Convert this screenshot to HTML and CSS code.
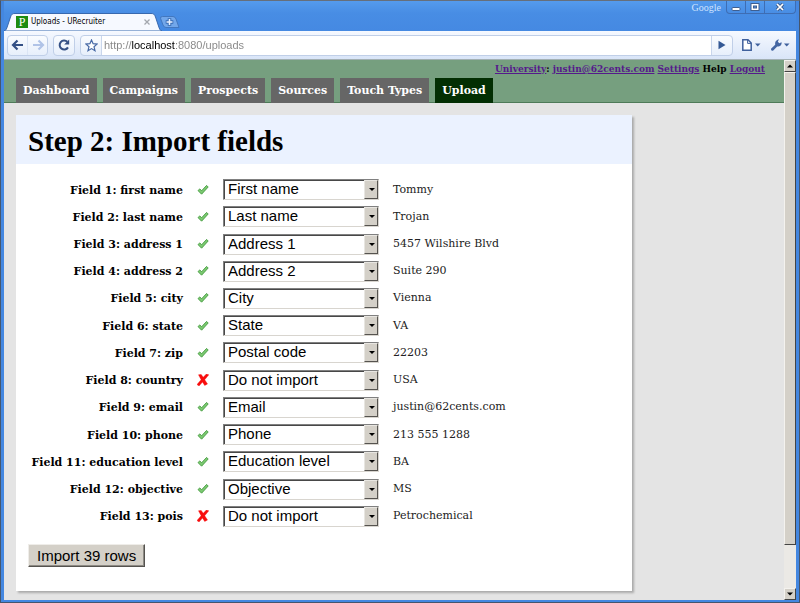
FILE: index.html
```html
<!DOCTYPE html>
<html lang="en">
<head>
<meta charset="utf-8">
<title>Uploads - URecruiter</title>
<link rel="stylesheet" href="styles.css">
</head>
<body>
<svg class="defs" aria-hidden="true">
  <symbol id="tick" viewBox="0 0 12 12"><path d="M1 6.600 2.800 4.900 4.600 6.800 9.600 1.400 11.200 3 4.600 10.200Z" fill="#7cc971" stroke="#449b40" stroke-width=".9" stroke-linejoin="round"/></symbol>
  <symbol id="cross" viewBox="0 0 12 12"><path d="M1.500.8 4.200.4 6.200 3.300 9.400 0 11.800.8 7.700 5.700 10.500 10 7.700 11.400 5.500 8 2 12 0 10.500 4.100 5.700Z" fill="#f80d0d" stroke="#f80d0d" stroke-width=".4"/></symbol>
</svg>
<div class="window">
  <div class="titlebar">
    <div class="tab">
      <svg class="tab-shape" viewBox="0 0 158 18" aria-hidden="true"><path d="M0 18C2 17.500 2.500 16 3.500 13L6.500 4C7.500 1 8.500.5 11 .5H147C149.500.5 150.500 1 151.500 4L154.500 13C155.500 16 156 17.500 158 18Z" fill="#f6f9ff" stroke="#3768ae"/></svg>
      <span class="favicon">P</span>
      <span class="tab-title">Uploads - URecruiter</span>
      <button class="tab-close" aria-label="Close tab"><svg viewBox="0 0 6 6"><path d="M.5.5 5.500 5.500M5.500.5.5 5.500" stroke="#a3a7ae" stroke-width="1.300"/></svg></button>
    </div>
    <button class="new-tab" aria-label="New tab"><svg viewBox="0 0 20 12"><path d="M2.500.5H13Q15 .5 16 3L19 11.500H6Q4 11.500 3 9L.6 2.500Q0 .5 2.500.5Z" fill="#72a7ea" stroke="#4277bf"/><path d="M9.500 2.200V9.800M5.700 6H13.300" stroke="#366bb4" stroke-width="3.600"/><path d="M9.500 3V9M6.500 6H12.500" stroke="#e6f0ff" stroke-width="1.600"/></svg></button>
    <span class="brand">Google</span>
    <div class="window-buttons">
      <button aria-label="Minimize"><svg viewBox="0 0 12 10"><rect x="2" y="5.500" width="8" height="3" rx="1" fill="#fff" stroke="#3e5f91"/></svg></button>
      <button aria-label="Maximize"><svg viewBox="0 0 12 10"><rect x="2" y="1.500" width="8" height="7" fill="#fff" stroke="#3e5f91"/><rect x="4.500" y="4" width="3" height="2" fill="#5591df" stroke="#3e5f91"/></svg></button>
      <button class="close" aria-label="Close"><svg viewBox="0 0 12 10"><path d="M3 2 9 8M9 2 3 8" stroke="#3e5f91" stroke-width="3.400"/><path d="M3 2 9 8M9 2 3 8" stroke="#fff" stroke-width="1.700"/></svg></button>
    </div>
  </div>
  <div class="toolbar">
    <div class="history">
      <button aria-label="Back"><svg viewBox="0 0 14 12"><path d="M6.500 1.500 2 6 6.500 10.500M2.500 6H12" fill="none" stroke="#345085" stroke-width="2.200"/></svg></button>
      <button aria-label="Forward"><svg viewBox="0 0 14 12"><path d="M7.500 1.500 12 6 7.500 10.500M11.500 6H2" fill="none" stroke="#b0c3e7" stroke-width="2.200"/></svg></button>
    </div>
    <button class="reload" aria-label="Reload"><svg viewBox="0 0 12 12"><path d="M10 8.400A4.500 4.500 0 1 1 9.300 2.800" fill="none" stroke="#345085" stroke-width="2"/><path d="M11.200.5V5.600H6.200Z" fill="#345085"/></svg></button>
    <form class="address">
      <button type="button" class="star" aria-label="Bookmark"><svg viewBox="0 0 13 13"><path d="M6.500 1 8.100 4.700 12 5.100 9 7.700 10 11.700 6.500 9.600 3 11.700 4 7.700 1 5.100 4.900 4.700Z" fill="#fff" stroke="#4668a5" stroke-width="1.200"/></svg></button>
      <div class="url-field"><input class="url" type="text" aria-label="Address" value="http://localhost:8080/uploads"></div>
      <button type="button" class="go" aria-label="Go"><svg viewBox="0 0 8 10"><path d="M.5.8 7.500 5 .5 9.200Z" fill="#345995"/></svg></button>
    </form>
    <button class="menu" aria-label="Page"><svg viewBox="0 0 20 14"><path d="M1.800 1.800H7L10.200 5V12.200H1.800Z" fill="#fff" stroke="#3f609d" stroke-width="1.500"/><path d="M6.600 2V5.400H10" fill="none" stroke="#3f609d"/><path d="M14 5.500H19.500L16.700 8.500Z" fill="#3f609d"/></svg></button>
    <button class="menu" aria-label="Tools"><svg viewBox="0 0 20 14"><path d="M1 10.700 5.200 6.700Q4.500 3 8 1.500L9 1.600 7.800 3.600 9.200 5.200 11.600 4.200Q12 7.600 8.500 8.500L7.200 8.600 3 12.700Q.5 13 1 10.700Z" fill="#4365a2"/><path d="M14 5.500H19.500L16.700 8.500Z" fill="#3f609d"/></svg></button>
  </div>
  <div class="viewport">
    <div class="page">
      <header class="site-header">
        <div class="account"><a href="#">University</a>: <a href="#">justin@62cents.com</a> <a href="#">Settings</a> Help <a href="#">Logout</a></div>
        <nav class="nav">
          <a href="#">Dashboard</a><a href="#">Campaigns</a><a href="#">Prospects</a><a href="#">Sources</a><a href="#">Touch Types</a><a href="#" class="current">Upload</a>
        </nav>
      </header>
      <main class="panel">
        <h1>Step 2: Import fields</h1>
        <form class="import">
          <table class="fields">
            <tbody>
              <tr><th scope="row"><label for="f1">Field 1: first name</label></th><td class="status"><svg><use href="#tick"/></svg></td><td class="choice"><div class="select"><select id="f1"><option>First name</option></select></div></td><td>Tommy</td></tr>
              <tr><th scope="row"><label for="f2">Field 2: last name</label></th><td class="status"><svg><use href="#tick"/></svg></td><td class="choice"><div class="select"><select id="f2"><option>Last name</option></select></div></td><td>Trojan</td></tr>
              <tr><th scope="row"><label for="f3">Field 3: address 1</label></th><td class="status"><svg><use href="#tick"/></svg></td><td class="choice"><div class="select"><select id="f3"><option>Address 1</option></select></div></td><td>5457 Wilshire Blvd</td></tr>
              <tr><th scope="row"><label for="f4">Field 4: address 2</label></th><td class="status"><svg><use href="#tick"/></svg></td><td class="choice"><div class="select"><select id="f4"><option>Address 2</option></select></div></td><td>Suite 290</td></tr>
              <tr><th scope="row"><label for="f5">Field 5: city</label></th><td class="status"><svg><use href="#tick"/></svg></td><td class="choice"><div class="select"><select id="f5"><option>City</option></select></div></td><td>Vienna</td></tr>
              <tr><th scope="row"><label for="f6">Field 6: state</label></th><td class="status"><svg><use href="#tick"/></svg></td><td class="choice"><div class="select"><select id="f6"><option>State</option></select></div></td><td>VA</td></tr>
              <tr><th scope="row"><label for="f7">Field 7: zip</label></th><td class="status"><svg><use href="#tick"/></svg></td><td class="choice"><div class="select"><select id="f7"><option>Postal code</option></select></div></td><td>22203</td></tr>
              <tr><th scope="row"><label for="f8">Field 8: country</label></th><td class="status"><svg><use href="#cross"/></svg></td><td class="choice"><div class="select"><select id="f8"><option>Do not import</option></select></div></td><td>USA</td></tr>
              <tr><th scope="row"><label for="f9">Field 9: email</label></th><td class="status"><svg><use href="#tick"/></svg></td><td class="choice"><div class="select"><select id="f9"><option>Email</option></select></div></td><td>justin@62cents.com</td></tr>
              <tr><th scope="row"><label for="f10">Field 10: phone</label></th><td class="status"><svg><use href="#tick"/></svg></td><td class="choice"><div class="select"><select id="f10"><option>Phone</option></select></div></td><td>213 555 1288</td></tr>
              <tr><th scope="row"><label for="f11">Field 11: education level</label></th><td class="status"><svg><use href="#tick"/></svg></td><td class="choice"><div class="select"><select id="f11"><option>Education level</option></select></div></td><td>BA</td></tr>
              <tr><th scope="row"><label for="f12">Field 12: objective</label></th><td class="status"><svg><use href="#tick"/></svg></td><td class="choice"><div class="select"><select id="f12"><option>Objective</option></select></div></td><td>MS</td></tr>
              <tr><th scope="row"><label for="f13">Field 13: pois</label></th><td class="status"><svg><use href="#cross"/></svg></td><td class="choice"><div class="select"><select id="f13"><option>Do not import</option></select></div></td><td>Petrochemical</td></tr>
            </tbody>
          </table>
          <button type="button" class="submit">Import 39 rows</button>
        </form>
      </main>
    </div>
    <div class="scrollbar" aria-hidden="true">
      <span class="bevel step"><svg viewBox="0 0 6 4"><path d="M0 3.500H6L3 .5Z"/></svg></span>
      <span class="bevel thumb"></span>
      <span class="rest"></span>
      <span class="bevel step"><svg viewBox="0 0 6 4"><path d="M0 .5H6L3 3.500Z"/></svg></span>
    </div>
  </div>
</div>
</body>
</html>
```
FILE: styles.css
```css
* { box-sizing: border-box; }
body { margin: 0; font-family: "DejaVu Serif", serif; }
button, input, select { margin: 0; padding: 0; border: 0; background: none; font: inherit; color: inherit; }
svg { display: block; }
.defs { position: absolute; width: 0; height: 0; }

.window {
  display: flex;
  flex-direction: column;
  min-height: 100vh;
  padding: 0 3px 2px;
  border: 1px solid #45566e;
  border-top-color: #666f7b;
  background: #4487e0;
}

/* Title bar */
.titlebar { display: flex; align-items: flex-end; height: 30px; background: linear-gradient(#559bed, #488de4 40%, #4589e2); }
.tab { position: relative; display: flex; align-items: center; width: 158px; height: 18px; padding: 0 7px 0 12px; }
.tab-shape { position: absolute; inset: 0; width: 100%; height: 100%; }
.favicon { position: relative; width: 12px; height: 12px; background: #1d8c12; color: #fff; font: 12px/12px "Liberation Serif", serif; text-align: center; }
.tab-title { position: relative; flex: 1; margin-left: 3px; font: 8px/12px "DejaVu Sans Condensed", "DejaVu Sans", sans-serif; color: #000; }
.tab-close { position: relative; width: 6px; margin-right: 5px; }
.new-tab { width: 20px; height: 12px; margin: 0 0 3px -2px; }
.brand { align-self: flex-start; margin-left: auto; margin-right: 5px; font: 10px/13px "Liberation Serif", serif; color: #d0e3ff; }
.window-buttons { display: flex; align-self: flex-start; border: 1px solid #3e6db3; border-top: 0; border-radius: 0 0 4px 4px; }
.window-buttons button { display: grid; place-items: center; width: 19px; height: 12px; border-right: 1px solid #3e6db3; }
.window-buttons .close { width: 30px; border: 0; }
.window-buttons svg { width: 12px; height: 10px; }

/* Toolbar */
.toolbar { display: flex; align-items: center; height: 28px; padding: 0 6px 0 3px; background: linear-gradient(#f6f9ff, #d9e5f8); }
.toolbar button { display: grid; place-items: center; height: 19px; }
.history, .reload, .address { border: 1px solid #c0cfe8; border-radius: 4px; background: linear-gradient(#fafcff, #e7effb); }
.history { display: flex; width: 41px; height: 21px; }
.history button { flex: 1; border-right: 1px solid #dbe5f5; }
.history button:last-child { border: 0; }
.history svg { width: 14px; height: 12px; }
.toolbar .reload { width: 22px; height: 21px; margin: 0 5px; }
.reload svg { width: 12px; height: 12px; }
.address { display: flex; flex: 1; height: 21px; }
.star { width: 20px; }
.star svg { width: 13px; height: 13px; }
.url-field { flex: 1; display: flex; border: solid #c9d6ec; border-width: 0 1px; background: #fff; }
/* The host name is darker than the rest of the address */
.url {
  flex: 1;
  min-width: 0;
  height: 19px;
  padding: 0 2px;
  background: linear-gradient(90deg, #858585 30px, #000 30px, #000 73px, #858585 73px);
  background-clip: text;
  color: transparent;
  font: 11px/19px "Liberation Sans", sans-serif;
}
.go { width: 20px; }
.go svg { width: 8px; height: 10px; }
.menu { width: 20px; margin-left: 8px; }
.menu + .menu { margin-left: 9px; }
.menu svg { width: 20px; height: 14px; }

/* Page area */
.viewport { display: flex; flex: 1; border-top: 1px solid #a3b0b3; }
.page { flex: 1; padding-bottom: 9px; background: #e4e4e4; }
.site-header {
  display: flex;
  flex-direction: column;
  justify-content: space-between;
  height: 43px;
  padding: 2px 19px 0 12px;
  border-bottom: 1px solid #4e7a58;
  background: #769f7f;
}
.account { align-self: flex-end; font-size: 9px; font-weight: bold; line-height: 14px; }
.account a { color: #551a8b; }
.nav { display: flex; gap: 6px; margin-bottom: -1px; }
.nav a { padding: 0 7px; background: #666; color: #fff; font-size: 11px; font-weight: bold; line-height: 25px; text-decoration: none; }
.nav .current { background: #032f03; }

.panel { max-width: 616px; margin: 12px 12px 0; background: #fff; box-shadow: 2px 2px 2px #aaa; }
h1 { margin: 0; padding: 4px 12px 0; background: #ebf2ff; font: bold 29px/45px "Liberation Serif", serif; }
.import { padding: 12px 12px 24px; }
.fields { height: 354px; border-collapse: collapse; font-size: 11px; line-height: 16px; }
.fields th, .fields td { padding: 0; text-align: left; white-space: nowrap; }
.fields td { color: #222; }
.fields th { width: 155px; padding-top: 2px; text-align: right; }
.fields .status { width: 40px; }
.status svg { width: 12px; height: 12px; margin: 0 auto; }
.fields .choice { width: 170px; }
.select {
  position: relative;
  width: 156px;
  height: 21px;
  border: 1px solid;
  border-color: #808080 #d8d5cf #d8d5cf #808080;
  box-shadow: inset 1px 1px #484848;
  background: #fff;
}
.select select { appearance: none; display: block; width: 100%; height: 19px; padding: 0 0 2px 4px; font: 15px/17px "Liberation Sans", sans-serif; color: #000; }
.select::before {
  content: "";
  position: absolute;
  inset: 0 0 0 auto;
  width: 12px;
  border: 1px solid;
  border-color: #e8e6e1 #55534f #55534f #e8e6e1;
  background: #d4d0c8;
  pointer-events: none;
}
.select::after {
  content: "";
  position: absolute;
  top: 8px;
  right: 3px;
  border: solid transparent;
  border-width: 3px 3px 0;
  border-top-color: #000;
  pointer-events: none;
}
.submit {
  display: block;
  height: 23px;
  margin-top: 14px;
  padding: 0 8px;
  border: 1px solid;
  border-color: #efede9 #55534f #55534f #efede9;
  box-shadow: inset -1px -1px #8d8a84;
  background: #d4d0c8;
  font: 15px/21px "Liberation Sans", sans-serif;
}

/* Scroll bar */
.scrollbar { display: flex; flex-direction: column; width: 12px; background: #ebe9e5; }
.bevel { border: 1px solid; border-color: #f4f2ee #444 #444 #f4f2ee; background: #d4d0c8; }
.step { display: grid; place-items: center; height: 12px; }
.step svg { width: 6px; height: 4px; }
.thumb { flex: 11; }
.rest { flex: 1; }
```
